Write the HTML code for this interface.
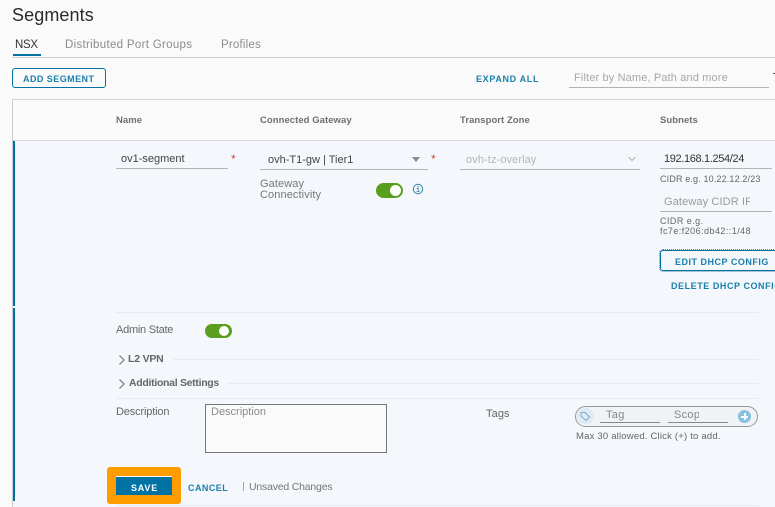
<!DOCTYPE html>
<html><head><meta charset="utf-8">
<style>
html,body{margin:0;padding:0;width:775px;height:507px;overflow:hidden;background:#fafafa;font-family:"Liberation Sans",sans-serif;color:#565656}
.t{position:absolute;white-space:nowrap;line-height:14px;font-size:12px}
.b{position:absolute}
.btn{font-weight:700;font-size:9px;letter-spacing:.45px;color:#1a7fab}
.hd{font-weight:700;font-size:9.5px;letter-spacing:.05px;color:#707070}
.sm{font-size:9px;letter-spacing:.15px;color:#666}
.h{position:absolute;height:1px;background:#e8ecef}
.u{position:absolute;height:1px;background:#b3b3b3}
</style></head><body>
<div class="t" style="left:12px;top:4px;font-size:18px;line-height:22px;color:#2b2b2b;letter-spacing:.1px">Segments</div>
<div class="t" style="left:15px;top:38px;color:#333;font-size:11.5px;letter-spacing:-.3px">NSX</div>
<div class="t" style="left:65px;top:38px;color:#8c8c8c;font-size:11.5px;letter-spacing:.31px">Distributed Port Groups</div>
<div class="t" style="left:221px;top:38px;color:#8c8c8c;font-size:11.5px;letter-spacing:.2px">Profiles</div>
<div class="b" style="left:12px;top:57px;width:763px;height:1px;background:#ccc"></div>
<div class="b" style="left:13px;top:54px;width:28px;height:2px;background:#0072a3"></div>
<div class="b" style="left:12px;top:68px;width:92px;height:18px;border:1px solid #0072a3;border-radius:3px"></div>
<div class="t btn" style="left:23px;top:72px">ADD SEGMENT</div>
<div class="t btn" style="left:476px;top:72px;letter-spacing:.66px">EXPAND ALL</div>
<div class="t" style="left:574px;top:71px;color:#a8a8a8;font-size:11px;letter-spacing:.14px">Filter by Name, Path and more</div>
<div class="u" style="left:569px;top:87px;width:200px"></div>
<div class="b" style="left:773px;top:73px;width:2px;height:1px;background:#555"></div>

<div class="b" style="left:12px;top:99px;width:763px;height:408px;border-left:1px solid #ccc;border-top:1px solid #d7d7d7;box-sizing:border-box;background:#fafafa"></div>
<div class="b" style="left:13px;top:140px;width:762px;height:1px;background:#d7d7d7"></div>
<div class="b" style="left:13px;top:141px;width:762px;height:366px;background:#f4f7fb"></div>
<div class="b" style="left:13px;top:141px;width:2px;height:165px;background:#0072a3"></div>
<div class="b" style="left:13px;top:308px;width:2px;height:193px;background:#0072a3"></div>

<div class="t hd" style="left:116px;top:114px">Name</div>
<div class="t hd" style="left:260px;top:114px">Connected Gateway</div>
<div class="t hd" style="left:460px;top:114px">Transport Zone</div>
<div class="t hd" style="left:660px;top:114px">Subnets</div>

<div class="t" style="left:121px;top:152px;color:#444;font-size:11px">ov1-segment</div>
<div class="u" style="left:116px;top:168px;width:112px"></div>
<div class="t" style="left:231px;top:152px;color:#d0503a;font-size:12px">*</div>
<div class="t" style="left:268px;top:153px;color:#444;font-size:11px">ovh-T1-gw | Tier1</div>
<div class="u" style="left:260px;top:169px;width:168px"></div>
<div class="b" style="left:412px;top:157px;width:0;height:0;border-left:4px solid transparent;border-right:4px solid transparent;border-top:5px solid #8c8c8c"></div>
<div class="t" style="left:431px;top:152px;color:#d0503a;font-size:12px">*</div>
<div class="t" style="left:466px;top:153px;color:#b5b5b5;font-size:11px;letter-spacing:.1px">ovh-tz-overlay</div>
<div class="u" style="left:460px;top:169px;width:180px"></div>
<svg class="b" style="left:627px;top:156px" width="10" height="6"><path d="M1.5 1 L5 4.5 L8.5 1" fill="none" stroke="#b5b5b5" stroke-width="1"/></svg>

<div class="t" style="left:260px;top:179px;color:#777;font-size:11px;line-height:11px;letter-spacing:.1px">Gateway<br>Connectivity</div>
<div class="b" style="left:376px;top:183px;width:27px;height:15px;border-radius:8px;background:#5a9e1f"></div>
<div class="b" style="left:390px;top:185px;width:11px;height:11px;border-radius:50%;background:#fff"></div>
<svg class="b" style="left:412px;top:183px" width="12" height="12"><circle cx="6" cy="6" r="4.7" fill="none" stroke="#2f86ad" stroke-width="1"/><path d="M4.7 5.2H6.2V8.4M4.6 8.6H7.6" fill="none" stroke="#2f86ad" stroke-width=".8"/><rect x="5.4" y="3" width="1.1" height="1.1" fill="#2f86ad"/></svg>

<div class="t" style="left:664px;top:152px;color:#333;font-size:11px;letter-spacing:-.35px">192.168.1.254/24</div>
<div class="u" style="left:660px;top:168px;width:112px"></div>
<div class="t sm" style="left:660px;top:172px">CIDR e.g. 10.22.12.2/23</div>
<div class="t" style="left:664px;top:195px;color:#999;font-size:11px;letter-spacing:.12px;width:86px;overflow:hidden">Gateway CIDR IPv6</div>
<div class="u" style="left:660px;top:211px;width:112px"></div>
<div class="t sm" style="left:660px;top:216px;line-height:10px;letter-spacing:.45px">CIDR e.g.<br>fc7e:f206:db42::1/48</div>
<div class="b" style="left:660px;top:250px;width:120px;height:19px;border:1px solid #0072a3;border-radius:3px;outline:1px dotted #5a8fa8"></div>
<div class="t btn" style="left:675px;top:255px;letter-spacing:.5px">EDIT DHCP CONFIG</div>
<div class="t btn" style="left:671px;top:279px;letter-spacing:.55px">DELETE DHCP CONFIG</div>

<div class="h" style="left:116px;top:312px;width:642px"></div>
<div class="t" style="left:116px;top:323px;color:#666;font-size:11px;letter-spacing:-.25px">Admin State</div>
<div class="b" style="left:205px;top:324px;width:27px;height:14px;border-radius:7px;background:#5a9e1f"></div>
<div class="b" style="left:219px;top:326px;width:10px;height:10px;border-radius:50%;background:#fff"></div>

<svg class="b" style="left:118px;top:354px" width="8" height="12"><path d="M1.5 1.5 L6 6 L1.5 10.5" fill="none" stroke="#777" stroke-width="1.2"/></svg>
<div class="t" style="left:128px;top:352px;font-weight:700;font-size:10.5px;color:#666;letter-spacing:-.2px">L2 VPN</div>
<div class="h" style="left:173px;top:359px;width:585px"></div>
<svg class="b" style="left:118px;top:378px" width="8" height="12"><path d="M1.5 1.5 L6 6 L1.5 10.5" fill="none" stroke="#777" stroke-width="1.2"/></svg>
<div class="t" style="left:129px;top:376px;font-weight:700;font-size:10.5px;color:#666;letter-spacing:-.3px">Additional Settings</div>
<div class="h" style="left:227px;top:383px;width:531px"></div>
<div class="h" style="left:116px;top:398px;width:642px"></div>

<div class="t" style="left:116px;top:405px;color:#666;font-size:11px;letter-spacing:-.15px">Description</div>
<div class="b" style="left:205px;top:404px;width:180px;height:47px;border:1px solid #777;background:#fafafa"></div>
<div class="t" style="left:211px;top:405px;color:#8c8c8c;font-size:11px">Description</div>

<div class="t" style="left:486px;top:407px;color:#666;font-size:11px;letter-spacing:.1px">Tags</div>
<div class="b" style="left:575px;top:406px;width:181px;height:19px;border:1px solid #999;border-radius:11px;background:#eff3f6"></div>
<div class="b" style="left:577px;top:408px;width:17px;height:16px;border-radius:50%;background:#deebf3"></div>
<svg class="b" style="left:580px;top:411px" width="11" height="11"><path d="M1 1.5H5L9.5 6 6 9.5 1 5Z" fill="none" stroke="#5a9bbd" stroke-width=".8"/></svg>
<div class="t" style="left:606px;top:408px;color:#888;font-size:11px;letter-spacing:.3px">Tag</div>
<div class="u" style="left:600px;top:422px;width:60px;background:#888"></div>
<div class="t" style="left:674px;top:408px;color:#888;font-size:11px;letter-spacing:.3px;width:25px;overflow:hidden">Scope</div>
<div class="u" style="left:668px;top:422px;width:60px;background:#888"></div>
<div class="b" style="left:738px;top:410px;width:13px;height:13px;border-radius:50%;background:#89bfdf"></div>
<div class="b" style="left:741px;top:416px;width:7px;height:1.5px;background:#fff"></div>
<div class="b" style="left:744px;top:413px;width:1.5px;height:7px;background:#fff"></div>
<div class="t sm" style="left:576px;top:430px;font-size:9.5px;letter-spacing:.2px">Max 30 allowed. Click (+) to add.</div>

<div class="b" style="left:107px;top:467px;width:74px;height:37px;background:#ff9c00;border-radius:3px"></div>
<div class="b" style="left:116px;top:477px;width:56px;height:18px;background:#0072a3"></div>
<div class="b" style="left:116px;top:476px;width:56px;height:1px;background:#fff"></div>
<div class="t" style="left:131px;top:481px;color:#fff;font-weight:700;font-size:9px;letter-spacing:.8px">SAVE</div>
<div class="t btn" style="left:188px;top:481px">CANCEL</div>
<div class="b" style="left:243px;top:482px;width:1px;height:9px;background:#7fb2cc"></div>
<div class="t" style="left:249px;top:480px;color:#777;font-size:10.5px;letter-spacing:-.2px">Unsaved Changes</div>
<div class="h" style="left:116px;top:505px;width:642px"></div>
</body></html>
